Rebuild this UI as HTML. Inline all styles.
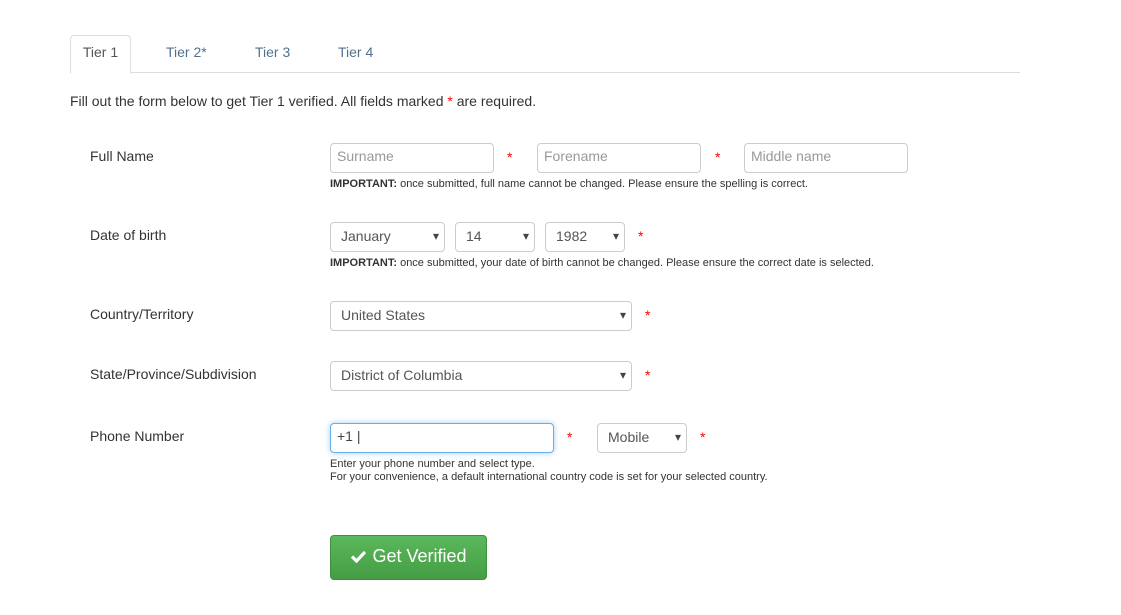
<!DOCTYPE html>
<html><head><style>
body{margin:0;width:1121px;height:615px;background:#fff;font-family:"Liberation Sans",sans-serif;color:#333;position:relative;overflow:hidden}
.a{position:absolute;white-space:nowrap}
.tabline{position:absolute;left:70px;top:72px;width:950px;height:1px;background:#ddd}
.tab1{position:absolute;left:70px;top:35px;width:59px;height:37px;border:1px solid #ddd;border-bottom:1px solid #fff;border-radius:4px 4px 0 0;background:#fff;font-size:14px;text-align:center;line-height:33px;color:#555}
.tab{font-size:14px;color:#52708c;top:44px}
.lbl{font-size:14px;left:90px}
.box{position:absolute;height:28px;border:1px solid #ccc;border-radius:4px;box-sizing:border-box;font-size:14px;line-height:26px;padding-left:10px;color:#555;background:#fff}
.ph{color:#999;padding-left:6px}
.box.sel:after{content:"\25BE";position:absolute;right:5px;top:0;font-size:12px;color:#444}
.st{color:#f00;font-size:14px}
.small{font-size:11px;color:#333}
</style></head><body>
<div class="tabline"></div>
<div class="tab1">Tier 1</div>
<div class="a tab" style="left:166px">Tier 2*</div>
<div class="a tab" style="left:255px">Tier 3</div>
<div class="a tab" style="left:338px">Tier 4</div>
<div class="a" style="left:70px;top:93px;font-size:14px">Fill out the form below to get Tier 1 verified. All fields marked <span class="st">*</span> are required.</div>

<div class="a lbl" style="top:148px">Full Name</div>
<div class="box ph" style="left:330px;top:143px;width:164px;height:30px;line-height:25px">Surname</div>
<div class="a st" style="left:507px;top:149px">*</div>
<div class="box ph" style="left:537px;top:143px;width:164px;height:30px;line-height:25px">Forename</div>
<div class="a st" style="left:715px;top:149px">*</div>
<div class="box ph" style="left:744px;top:143px;width:164px;height:30px;line-height:25px">Middle name</div>
<div class="a small" style="left:330px;top:178px"><b>IMPORTANT:</b> once submitted, full name cannot be changed. Please ensure the spelling is correct.</div>

<div class="a lbl" style="top:227px">Date of birth</div>
<div class="box sel" style="left:330px;top:222px;width:115px;height:30px">January</div>
<div class="box sel" style="left:455px;top:222px;width:80px;height:30px">14</div>
<div class="box sel" style="left:545px;top:222px;width:80px;height:30px">1982</div>
<div class="a st" style="left:638px;top:228px">*</div>
<div class="a small" style="left:330px;top:257px"><b>IMPORTANT:</b> once submitted, your date of birth cannot be changed. Please ensure the correct date is selected.</div>

<div class="a lbl" style="top:306px">Country/Territory</div>
<div class="box sel" style="left:330px;top:301px;width:302px;height:30px">United States</div>
<div class="a st" style="left:645px;top:307px">*</div>

<div class="a lbl" style="top:366px">State/Province/Subdivision</div>
<div class="box sel" style="left:330px;top:361px;width:302px;height:30px">District of Columbia</div>
<div class="a st" style="left:645px;top:367px">*</div>

<div class="a lbl" style="top:428px">Phone Number</div>
<div class="box" style="left:330px;top:423px;width:224px;height:30px;border-color:#66afe9;box-shadow:0 0 6px rgba(102,175,233,.6);padding-left:6px;color:#444;line-height:25px">+1 |</div>
<div class="a st" style="left:567px;top:429px">*</div>
<div class="box sel" style="left:597px;top:423px;width:90px;height:30px">Mobile</div>
<div class="a st" style="left:700px;top:429px">*</div>
<div class="a small" style="left:330px;top:458px;line-height:13px">Enter your phone number and select type.<br>For your convenience, a default international country code is set for your selected country.</div>

<div class="a" style="left:330px;top:535px;width:157px;height:45px;box-sizing:border-box;border:1px solid #3e8f3e;border-radius:4px;background:linear-gradient(#5cb85c,#449d44);color:#fff;font-size:18px;line-height:41px;text-align:center">
<svg width="17" height="14" viewBox="0 0 17 14" style="vertical-align:-1px"><path d="M2 7.5l4.5 4.5L15 3" stroke="#fff" stroke-width="3.2" fill="none"/></svg> Get Verified</div>
</body></html>
